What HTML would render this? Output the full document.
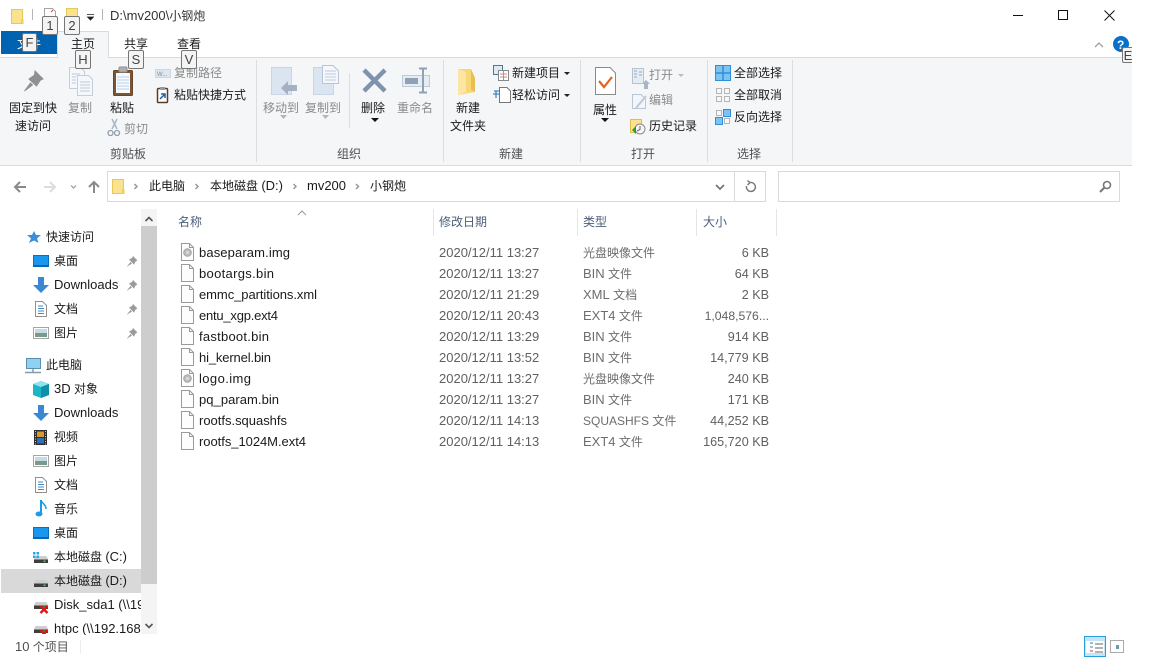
<!DOCTYPE html>
<html lang="zh">
<head>
<meta charset="utf-8">
<title>小钢炮</title>
<style>
html,body{margin:0;padding:0;background:#fff;width:1152px;height:659px;overflow:hidden}
svg{display:block;position:absolute;left:0;top:0}
text{font-family:"Liberation Sans","Noto Sans CJK SC",sans-serif;font-size:12px;fill:#1a1a1a}
.l{font-size:13px}
.g{fill:#8b8b8b}
.d{fill:#6d6d6d}
.h{fill:#4c607a}
.k{fill:#606060;font-size:13px}
.s{fill:#606060;font-size:12.6px}
.t{fill:#505050}
</style>
</head>
<body>
<svg width="1152" height="659" viewBox="0 0 1152 659" xmlns="http://www.w3.org/2000/svg">
<defs>
  <g id="file"><path d="M.5.500H8.500L12.500 4.500V17.500H.5Z" fill="#fdfdfd" stroke="#9a9a9a"/><path d="M8.500.500V4.500H12.500" fill="none" stroke="#9a9a9a"/></g>
  <g id="disc"><use href="#file"/><circle cx="6.500" cy="9.500" r="3.800" fill="#bdbdbd" stroke="#a5a5a5"/><circle cx="6.500" cy="9.500" r="1.200" fill="#e8e8e8"/></g>
  <g id="folder"><path d="M.5 1.500H11.500V12L12 15.500H.5Z" fill="#fbe28f" stroke="#e9c85a"/><path d="M10 11H12.500V15.500H10Z" fill="#f2cc5c"/></g>
  <g id="pin"><path d="M6.500 0L11 4.500 9 5.500 7.500 8.500 2.500 3.500 5.500 2Z M4 6L0 11 5.500 7.500Z" fill="#9a9a9a"/></g>
  <g id="desk"><rect x=".5" y=".5" width="15" height="11" fill="#1a96ec" stroke="#0c6fbd"/><rect x="1" y="10" width="14" height="1.500" fill="#0b5fa5"/></g>
  <g id="down"><path d="M5 0H11V8H16L8 16 0 8H5Z" fill="#3b87d6"/></g>
  <g id="doc"><path d="M.5.500H7.500L11.500 4.500V15.500H.5Z" fill="#fff" stroke="#8f8f8f"/><path d="M3 5H8M3 7.500H9M3 10H9M3 12.500H9" stroke="#4a87c4"/></g>
  <g id="pic"><rect x=".5" y=".5" width="15" height="11" fill="#fff" stroke="#a5a5a5"/><rect x="2" y="2" width="12" height="4" fill="#c5dbe8"/><rect x="2" y="6" width="12" height="4" fill="#7a9a88"/></g>
  <g id="drive"><path d="M1.500 1H12.500L14 4V8H0V4Z" fill="#cfcfcf"/><rect x="0" y="4.500" width="14" height="3.500" fill="#3e3e3e"/><rect x="9.500" y="5.500" width="2" height="1.500" fill="#46d046"/></g>
  <g id="netd"><use href="#drive"/><path d="M6.500 5L13.500 12M13.500 5L6.500 12" stroke="#d81818" stroke-width="2.400"/></g>
</defs>

<!-- ribbon -->
<rect x="0" y="57" width="1132" height="109" fill="#f5f6f7"/>
<path d="M0 57.500H1132M0 165.500H1132" stroke="#dadbdc"/>
<path d="M256.500 60V162M443.500 60V162M580.500 60V162M707.500 60V162M792.500 60V162M349.500 73V128" stroke="#dcdde0"/>
<rect x="1" y="31" width="56" height="23" fill="#0063b1"/>
<path d="M57.500 57.500V31.500H108.500V57.500" fill="#f5f6f7" stroke="#dadbdc"/>
<rect x="58" y="55" width="50" height="4" fill="#f5f6f7"/>

<!-- title bar -->
<g transform="translate(11,8)"><use href="#folder"/></g>
<path d="M32.500 9V20M102.500 9V20" stroke="#b5b5b5"/>
<path d="M44.500 8.500H52.500L55.500 11.500V22H44.500Z" fill="#fff" stroke="#a5a5a5"/>
<path d="M51 12L53 10" stroke="#d0402a"/>
<path d="M66.500 8.500H77.500V20H66.500Z" fill="#fbe28f" stroke="#e9c85a"/>
<path d="M87 14.500H94M87.500 17H93.500L90.500 20Z" fill="#222" stroke="#222" stroke-width=".8"/>
<text class="l" x="110" y="20" style="fill:#333">D:\mv200\<tspan style="font-size:12px">小钢炮</tspan></text>

<!-- window buttons -->
<path d="M1013 15.500H1023" stroke="#111"/>
<rect x="1058.500" y="10.500" width="9" height="9" fill="none" stroke="#111"/>
<path d="M1104.500 10.500L1114.500 20.500M1114.500 10.500L1104.500 20.500" stroke="#111"/>

<!-- tabs -->
<text x="17" y="48" style="fill:#fff">文件</text>
<text x="71" y="48">主页</text>
<text x="124" y="48">共享</text>
<text x="177" y="48">查看</text>
<path d="M1095 47L1099 43 1103 47" fill="none" stroke="#a0a0a0" stroke-width="1.300"/>
<circle cx="1121" cy="44" r="8" fill="#0a6fc9"/>
<text x="1117" y="49" style="fill:#fff;font-weight:bold;font-size:12px">?</text>

<!-- clipboard group icons -->
<g transform="translate(22,70)"><path d="M13 1L21 9 18.500 10 14.500 16 7 9 12.500 5Z M8.500 13L2.500 21 10.500 15Z" fill="#8f9092" stroke="#8f9092"/></g>
<g fill="#f4f7fb" stroke="#c3cedc">
  <path d="M69.500 67.500H80.500L84.500 71.500V88.500H69.500Z"/>
  <path d="M77.500 75.500H88.500L92.500 79.500V95.500H77.500Z"/>
</g>
<path d="M72 74H80M72 77H76M72 80H76M72 83H76M80 82H90M80 85H90M80 88H90M80 91H90" stroke="#bcc9d9"/>
<rect x="113.500" y="70.500" width="19" height="25" rx="1" fill="#7a5536" stroke="#6a4526"/>
<rect x="116" y="73" width="14" height="20" fill="#f6f9fd"/>
<path d="M117 77H129M117 80H129M117 83H129M117 86H129M117 89H129" stroke="#b8d2ea"/>
<rect x="119" y="67" width="8" height="5" rx="1" fill="#aeb0b3" stroke="#8f9092"/>
<rect x="155.500" y="69.500" width="15" height="8" fill="#dfe6f0" stroke="#cdd6e2"/>
<text x="157" y="76" style="font-size:6px;fill:#7f8ba0">W...</text>
<rect x="157.500" y="88.500" width="10" height="14" rx="1" fill="#fff" stroke="#5a3d26" stroke-width="1.500"/>
<rect x="160" y="87" width="5" height="3" fill="#999"/>
<path d="M160 99L164 95M161 94H165V98" stroke="#1b5ea8" stroke-width="1.500" fill="none"/>
<path d="M112 119L117 129M117 119L112 129" stroke="#a9b6c6" stroke-width="1.500"/>
<circle cx="110.500" cy="133" r="2.500" fill="none" stroke="#8f9db0" stroke-width="1.300"/>
<circle cx="117" cy="133" r="2.500" fill="none" stroke="#8f9db0" stroke-width="1.300"/>

<!-- clipboard text -->
<text x="9" y="112">固定到快</text>
<text x="15" y="130">速访问</text>
<text class="g" x="68" y="112">复制</text>
<text x="110" y="112">粘贴</text>
<text class="g" x="124" y="133">剪切</text>
<text class="g" x="174" y="77">复制路径</text>
<text x="174" y="99">粘贴快捷方式</text>
<text class="t" x="110" y="158">剪贴板</text>

<!-- organize -->
<rect x="271.500" y="67.500" width="20" height="27" fill="#dbe4f1" stroke="#c9d5e6"/>
<path d="M281 88L288 81V85H297V91H288V95Z" fill="#a4b1c5"/>
<rect x="313.500" y="67.500" width="20" height="27" fill="#dbe4f1" stroke="#c9d5e6"/>
<path d="M322.500 65.500H333L338.500 71V83.500H322.500Z" fill="#f4f7fb" stroke="#b9c5d6"/>
<path d="M325 71H336M325 74H336M325 77H336M325 80H336" stroke="#c1cbd9"/>
<path d="M364 70L385 91M385 70L364 91" stroke="#8093ae" stroke-width="4.500"/>
<rect x="402.500" y="75.500" width="27" height="11" fill="#e6ecf4" stroke="#bccada"/>
<rect x="405" y="78" width="13" height="6" fill="#8fa0b7"/>
<path d="M423 69V92M419 68.500H427M419 92.500H427" stroke="#8fa0b7" stroke-width="2"/>
<path d="M280 115H287L283.500 119Z M322 115H329L325.500 119Z" fill="#b5b5b5"/>
<path d="M371 118H379L375 122Z" fill="#111"/>
<text class="g" x="263" y="112">移动到</text>
<text class="g" x="305" y="112">复制到</text>
<text x="361" y="112">删除</text>
<text class="g" x="397" y="112">重命名</text>
<text class="t" x="337" y="158">组织</text>

<!-- new -->
<path d="M458 69H471L475 78V92L458 95Z" fill="#f8d775"/>
<path d="M471 69V90L475 92V78Z" fill="#e9bf55"/>
<path d="M458 69V95L466 92V72Z" fill="#fbe7a3"/>
<rect x="493.500" y="65.500" width="9" height="9" fill="#dfe9f3" stroke="#4b7a9c"/>
<rect x="498.500" y="70.500" width="10" height="10" fill="#fff" stroke="#888"/>
<path d="M500 74H507M500 77H507M503.500 71V80" stroke="#c48a8a"/>
<path d="M499.500 87.500H507L510.500 91V102.500H499.500Z" fill="#fff" stroke="#777"/>
<path d="M494 91H500M493 94H499M496 91V98" stroke="#1b6fb8"/>
<path d="M564 72H570L567 75Z M564 94H570L567 97Z" fill="#222"/>
<text x="456" y="112">新建</text>
<text x="450" y="130">文件夹</text>
<text x="512" y="77">新建项目</text>
<text x="512" y="99">轻松访问</text>
<text class="t" x="499" y="158">新建</text>

<!-- open -->
<path d="M595.500 67.500H610L615.500 73V94.500H595.500Z" fill="#fff" stroke="#8a8a8a"/>
<path d="M599 81L604 87 612 77" fill="none" stroke="#e8601e" stroke-width="2.200"/>
<path d="M601 118H609L605 122Z" fill="#111"/>
<text x="593" y="114">属性</text>
<rect x="632.500" y="68.500" width="11" height="15" fill="#e6ecf4" stroke="#b5c2d2"/>
<path d="M634 71H637M634 74H637M634 77H637M639 72H642M639 75H642" stroke="#98a8bc"/>
<path d="M642 84L646 80 650 84H648V89H644V84Z" fill="#a9b6c8"/>
<path d="M632.500 94.500H641L645.500 99V108.500H632.500Z" fill="#f2f5fa" stroke="#b9c6d6"/>
<path d="M636 108L646 96" stroke="#bcc9da" stroke-width="2"/>
<rect x="630.500" y="119.500" width="11" height="13" fill="#fbe28f" stroke="#e2bd4d"/>
<circle cx="640" cy="129" r="5" fill="#f4f4f4" stroke="#8a8a8a"/>
<path d="M640 126V129.500L637 131" fill="none" stroke="#666"/>
<path d="M632 130L636 126V134Z" fill="#2f9a35"/>
<path d="M678 74H684L681 77Z" fill="#bbb"/>
<text class="g" x="649" y="79">打开</text>
<text class="g" x="649" y="104">编辑</text>
<text x="649" y="130">历史记录</text>
<text class="t" x="631" y="158">打开</text>

<!-- select -->
<rect x="715.500" y="65.500" width="15" height="15" fill="#7cc2f2" stroke="#2f8fd8"/>
<path d="M723 65V81M715 73H731" stroke="#2f8fd8" stroke-width="1.500"/>
<g fill="#f8f8f8" stroke="#b5b5b5"><rect x="716.500" y="88.500" width="5" height="5"/><rect x="724.500" y="88.500" width="5" height="5"/><rect x="716.500" y="96.500" width="5" height="5"/><rect x="724.500" y="96.500" width="5" height="5"/></g>
<rect x="716.500" y="110.500" width="5" height="5" fill="#f8f8f8" stroke="#b5b5b5"/>
<rect x="723.500" y="109.500" width="7" height="7" fill="#7cc2f2" stroke="#2f8fd8"/>
<rect x="715.500" y="117.500" width="7" height="7" fill="#7cc2f2" stroke="#2f8fd8"/>
<rect x="724.500" y="118.500" width="5" height="5" fill="#f8f8f8" stroke="#b5b5b5"/>
<text x="734" y="77">全部选择</text>
<text x="734" y="99">全部取消</text>
<text x="734" y="121">反向选择</text>
<text class="t" x="737" y="158">选择</text>

<!-- nav -->
<path d="M26 187H15M20 182L15 187 20 192" fill="none" stroke="#8a8a8a" stroke-width="2"/>
<path d="M44 187H55M50 182L55 187 50 192" fill="none" stroke="#dcdcdc" stroke-width="2"/>
<path d="M71 185.500L73.500 188 76 185.500" fill="none" stroke="#999" stroke-width="1.200"/>
<path d="M94 193V182M89 187L94 182 99 187" fill="none" stroke="#8a8a8a" stroke-width="2"/>
<rect x="107.500" y="171.500" width="658" height="30" fill="#fff" stroke="#d9d9d9"/>
<path d="M734.500 172V201" stroke="#d9d9d9"/>
<rect x="778.500" y="171.500" width="341" height="30" fill="#fff" stroke="#d9d9d9"/>
<g transform="translate(112,178)"><use href="#folder"/></g>
<g fill="none" stroke="#999" stroke-width="1.500">
<path d="M134.500 184L137 186.500 134.500 189M195.500 184L198 186.500 195.500 189M293.500 184L296 186.500 293.500 189M356 184L358.500 186.500 356 189"/>
</g>
<text x="149" y="190">此电脑</text>
<text x="210" y="190">本地磁盘 <tspan class="l">(D:)</tspan></text>
<text class="l" x="307" y="190">mv200</text>
<text x="370" y="190">小钢炮</text>
<path d="M716 185L720 189 724 185" fill="none" stroke="#777" stroke-width="1.800"/>
<path d="M749.500 182.700A4.500 4.500 0 1 1 746.500 186M747.500 180.500L750 182.700 747.500 185" fill="none" stroke="#777" stroke-width="1.400"/>
<circle cx="1107" cy="185" r="3.500" fill="none" stroke="#777" stroke-width="1.600"/>
<path d="M1104.500 187.500L1100 192" stroke="#777" stroke-width="2"/>

<!-- sidebar -->
<rect x="1" y="569" width="140" height="24" fill="#d9d9d9"/>
<rect x="141" y="209" width="16" height="425" fill="#f4f4f4"/>
<rect x="141" y="226" width="16" height="358" fill="#cdcdcd"/>
<path d="M145.500 221L149 217.500 152.500 221M145.500 624L149 627.500 152.500 624" fill="none" stroke="#555" stroke-width="1.600"/>

<g>
  <path d="M34 231L36 235H41L37 238.500 38.500 243 34 240.500 29 243 31 238.500 27 235H32Z" fill="#3a8fdc"/>
  <g transform="translate(33,255)"><use href="#desk"/></g>
  <g transform="translate(33,277)"><use href="#down"/></g>
  <g transform="translate(35,301)"><use href="#doc"/></g>
  <g transform="translate(33,327)"><use href="#pic"/></g>
  <g transform="translate(126.500,256)"><use href="#pin"/></g>
  <g transform="translate(126.500,280)"><use href="#pin"/></g>
  <g transform="translate(126.500,304)"><use href="#pin"/></g>
  <g transform="translate(126.500,328)"><use href="#pin"/></g>

  <rect x="26.500" y="358.500" width="14" height="10" fill="#8fd0f5" stroke="#5a8fb0"/>
  <path d="M25 372.500H41M33 369V372" stroke="#8c9aa8" stroke-width="1.500"/>

  <path d="M41 381L49 384V395L41 398 33 395V384Z" fill="#1fb5c8"/>
  <path d="M33 384L41 387 49 384 41 381Z" fill="#8fe3ee"/>
  <path d="M41 387V398L49 395V384Z" fill="#0f8fa8"/>
  <g transform="translate(33,405)"><use href="#down"/></g>
  <rect x="34" y="430" width="13" height="15" fill="#2e2e2e"/>
  <rect x="37" y="431.500" width="7" height="5.500" fill="#d89a30"/>
  <rect x="37" y="438" width="7" height="5.500" fill="#2d6fb8"/>
  <path d="M35.500 431V445M45.500 431V445" stroke="#ccc" stroke-dasharray="1 1.500"/>
  <g transform="translate(33,455)"><use href="#pic"/></g>
  <g transform="translate(35,477)"><use href="#doc"/></g>
  <path d="M41 500V513" stroke="#1d9be8" stroke-width="2"/>
  <path d="M41 500C42 504 46 504 46 509" fill="none" stroke="#1d9be8" stroke-width="1.500"/>
  <ellipse cx="39" cy="514" rx="3.500" ry="2.500" fill="#1d9be8"/>
  <g transform="translate(33,527)"><use href="#desk"/></g>
  <g transform="translate(34,555)"><use href="#drive"/></g>
  <path d="M33 552H35.500V554.500H33ZM36.500 552H39V554.500H36.500ZM33 555.500H35.500V558H33ZM36.500 555.500H39V558H36.500Z" fill="#2aa7ea"/>
  <g transform="translate(34,579)"><use href="#drive"/></g>
  <g transform="translate(34,601)"><use href="#netd"/></g>
  <svg x="0" y="609" width="141" height="25" viewBox="0 609 141 25" style="position:static"><g transform="translate(34,625)"><use href="#netd"/></g></svg>
</g>

<svg x="0" y="209" width="141" height="426" viewBox="0 209 141 426" style="position:static">
<text x="46" y="241">快速访问</text>
<text x="54" y="265">桌面</text>
<text class="l" x="54" y="289">Downloads</text>
<text x="54" y="313">文档</text>
<text x="54" y="337">图片</text>
<text x="46" y="369">此电脑</text>
<text x="54" y="393"><tspan class="l">3D</tspan> 对象</text>
<text class="l" x="54" y="417">Downloads</text>
<text x="54" y="441">视频</text>
<text x="54" y="465">图片</text>
<text x="54" y="489">文档</text>
<text x="54" y="513">音乐</text>
<text x="54" y="537">桌面</text>
<text x="54" y="561">本地磁盘 <tspan class="l">(C:)</tspan></text>
<text x="54" y="585">本地磁盘 <tspan class="l">(D:)</tspan></text>
<text class="l" x="54" y="609">Disk_sda1 (\\192.168.1.5)</text>
<text class="l" x="54" y="633">htpc (\\192.168.1.5)</text>
</svg>

<!-- status -->
<text x="15" y="651" class="t"><tspan class="l">10</tspan> 个项目</text>
<path d="M80.500 640V654" stroke="#eee"/>
<rect x="1084.500" y="636.500" width="21" height="20" fill="#c6e4f6" stroke="#26a0da"/>
<rect x="1086" y="641" width="18" height="12" fill="#fff"/>
<path d="M1095 644H1103M1095 648H1103M1095 652H1103" stroke="#666"/>
<path d="M1090 643H1093M1090 647H1093" stroke="#3a7ac0"/>
<path d="M1090 651H1093" stroke="#c04040"/>
<rect x="1110.500" y="640.500" width="13" height="12" fill="#fff" stroke="#aaa"/>
<rect x="1116" y="645" width="3" height="4" fill="#6a9aa8"/>

<!-- column headers -->
<path d="M298 215L302 211 306 215" fill="none" stroke="#9a9a9a"/>
<path d="M433.500 209V236M577.500 209V236M696.500 209V236M776.500 209V236" stroke="#e5e5e5"/>
<text class="h" x="178" y="226">名称</text>
<text class="h" x="439" y="226">修改日期</text>
<text class="h" x="583" y="226">类型</text>
<text class="h" x="703" y="226">大小</text>

<!-- files -->
<g transform="translate(181,243)"><use href="#disc"/></g>
<g transform="translate(181,264)"><use href="#file"/></g>
<g transform="translate(181,285)"><use href="#file"/></g>
<g transform="translate(181,306)"><use href="#file"/></g>
<g transform="translate(181,327)"><use href="#file"/></g>
<g transform="translate(181,348)"><use href="#file"/></g>
<g transform="translate(181,369)"><use href="#disc"/></g>
<g transform="translate(181,390)"><use href="#file"/></g>
<g transform="translate(181,411)"><use href="#file"/></g>
<g transform="translate(181,432)"><use href="#file"/></g>

<text class="l" x="199" y="257" textLength="91">baseparam.img</text>
<text class="l" x="199" y="278" textLength="75">bootargs.bin</text>
<text class="l" x="199" y="299" textLength="118">emmc_partitions.xml</text>
<text class="l" x="199" y="320" textLength="79">entu_xgp.ext4</text>
<text class="l" x="199" y="341" textLength="70">fastboot.bin</text>
<text class="l" x="199" y="362" textLength="72">hi_kernel.bin</text>
<text class="l" x="199" y="383" textLength="52">logo.img</text>
<text class="l" x="199" y="404" textLength="80">pq_param.bin</text>
<text class="l" x="199" y="425" textLength="88">rootfs.squashfs</text>
<text class="l" x="199" y="446" textLength="107">rootfs_1024M.ext4</text>

<text class="k" x="439" y="257">2020/12/11 13:27</text>
<text class="k" x="439" y="278">2020/12/11 13:27</text>
<text class="k" x="439" y="299">2020/12/11 21:29</text>
<text class="k" x="439" y="320">2020/12/11 20:43</text>
<text class="k" x="439" y="341">2020/12/11 13:29</text>
<text class="k" x="439" y="362">2020/12/11 13:52</text>
<text class="k" x="439" y="383">2020/12/11 13:27</text>
<text class="k" x="439" y="404">2020/12/11 13:27</text>
<text class="k" x="439" y="425">2020/12/11 14:13</text>
<text class="k" x="439" y="446">2020/12/11 14:13</text>

<text class="d" x="583" y="257">光盘映像文件</text>
<text class="d" x="583" y="278"><tspan class="l">BIN</tspan> 文件</text>
<text class="d" x="583" y="299"><tspan class="l">XML</tspan> 文档</text>
<text class="d" x="583" y="320"><tspan class="l">EXT4</tspan> 文件</text>
<text class="d" x="583" y="341"><tspan class="l">BIN</tspan> 文件</text>
<text class="d" x="583" y="362"><tspan class="l">BIN</tspan> 文件</text>
<text class="d" x="583" y="383">光盘映像文件</text>
<text class="d" x="583" y="404"><tspan class="l">BIN</tspan> 文件</text>
<text class="d" x="583" y="425">SQUASHFS 文件</text>
<text class="d" x="583" y="446"><tspan class="l">EXT4</tspan> 文件</text>

<g text-anchor="end">
<text class="s" x="769" y="257">6 KB</text>
<text class="s" x="769" y="278">64 KB</text>
<text class="s" x="769" y="299">2 KB</text>
<text class="s" x="769" y="320" style="font-size:12.2px">1,048,576...</text>
<text class="s" x="769" y="341">914 KB</text>
<text class="s" x="769" y="362">14,779 KB</text>
<text class="s" x="769" y="383">240 KB</text>
<text class="s" x="769" y="404">171 KB</text>
<text class="s" x="769" y="425">44,252 KB</text>
<text class="s" x="769" y="446">165,720 KB</text>
</g>

<!-- key tips -->
<g fill="#f4f4f4" stroke="#767676">
<rect x="42.500" y="16.500" width="15" height="18" rx="1.500"/>
<rect x="64.500" y="16.500" width="15" height="18" rx="1.500"/>
<rect x="22.500" y="33.500" width="14" height="18" rx="1.500"/>
<rect x="75.500" y="50.500" width="15" height="18" rx="1.500"/>
<rect x="128.500" y="50.500" width="15" height="18" rx="1.500"/>
<rect x="181.500" y="50.500" width="15" height="18" rx="1.500"/>
<rect x="1122.500" y="47.500" width="14" height="15" rx="1.500"/>
</g>
<rect x="1132" y="40" width="20" height="30" fill="#fff"/>
<g text-anchor="middle">
<text class="l" x="50" y="30" style="fill:#444">1</text>
<text class="l" x="72" y="30" style="fill:#444">2</text>
<text class="l" x="29.500" y="47" style="fill:#444">F</text>
<text class="l" x="83" y="64" style="fill:#444">H</text>
<text class="l" x="136" y="64" style="fill:#444">S</text>
<text class="l" x="189" y="64" style="fill:#444">V</text>
<text class="l" x="1128" y="60" style="fill:#444">E</text>
</g>
</svg>
</body>
</html>
